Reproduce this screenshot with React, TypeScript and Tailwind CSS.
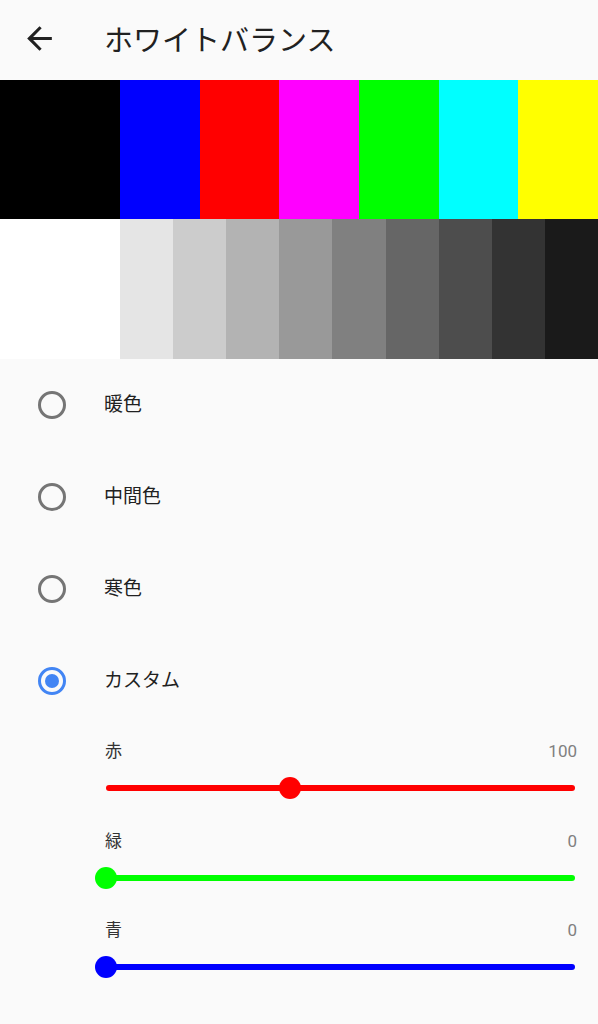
import React from "react";

const colorBars = ["#0000ff", "#ff0000", "#ff00ff", "#00ff00", "#00ffff", "#ffff00"];
const grayBars = ["#e5e5e5", "#cccccc", "#b3b3b3", "#999999", "#808080", "#666666", "#4d4d4d", "#333333", "#1a1a1a"];

const options = [
  { label: "暖色", selected: false },
  { label: "中間色", selected: false },
  { label: "寒色", selected: false },
  { label: "カスタム", selected: true },
];

const sliders = [
  { label: "赤", value: 100, color: "#ff0000" },
  { label: "緑", value: 0, color: "#00ff00" },
  { label: "青", value: 0, color: "#0000ff" },
];

function Slider({ label, value, color }: { label: string; value: number; color: string }) {
  const pct = (value / 255) * 100;
  return (
    <div className="h-[89.5px] flex flex-col">
      <div className="h-6 flex items-center justify-between pl-[1px]">
        <span className="text-[17px] text-[#333333]">{label}</span>
        <span className="text-[17px] text-[#808080]">{value}</span>
      </div>
      <div className="h-[48px] flex items-center pl-[2px] pr-[2px]">
        <div className="relative w-full h-[6px] rounded-full" style={{ backgroundColor: color }}>
          <div
            className="absolute top-1/2 w-[22px] h-[22px] rounded-full -translate-x-1/2 -translate-y-1/2"
            style={{ left: `${pct}%`, backgroundColor: color }}
          />
        </div>
      </div>
    </div>
  );
}

export default function App() {
  return (
    <div
      className="w-[598px] min-h-[1024px] bg-[#fafafa] text-[#212121]"
      style={{ fontFamily: 'Roboto, "Noto Sans CJK JP", sans-serif' }}
    >
      <header className="h-[80px] flex items-center">
        <div className="w-[104px] flex items-center pl-[21px] pb-[3px]">
          <svg width="37" height="37" viewBox="0 0 24 24" fill="#212121">
            <path d="M20 11H7.83l5.59-5.59L12 4l-8 8 8 8 1.41-1.41L7.83 13H20v-2z" />
          </svg>
        </div>
        <h1 className="text-[29px] leading-none font-normal pt-[2px]">ホワイトバランス</h1>
      </header>

      <div className="flex h-[139px]">
        <div className="w-[120px] bg-black" />
        {colorBars.map((c) => (
          <div key={c} className="flex-1" style={{ backgroundColor: c }} />
        ))}
      </div>
      <div className="flex h-[140px]">
        <div className="w-[120px] bg-white" />
        {grayBars.map((c) => (
          <div key={c} className="flex-1" style={{ backgroundColor: c }} />
        ))}
      </div>

      <div className="flex flex-col">
        {options.map((o) => (
          <div key={o.label} className="h-[92px] flex items-center">
            <div className="w-[104px] flex items-center pl-[38px]">
              <div
                className={
                  o.selected
                    ? "w-[28px] h-[28px] rounded-full border-[3px] border-[#4285f4] flex items-center justify-center"
                    : "w-[28px] h-[28px] rounded-full border-[3px] border-[#757575]"
                }
              >
                {o.selected && <div className="w-[14px] h-[14px] rounded-full bg-[#4285f4]" />}
              </div>
            </div>
            <span className="text-[19px]">{o.label}</span>
          </div>
        ))}
      </div>

      <div className="pt-[13px] pl-[104px] pr-[21px]">
        {sliders.map((s) => (
          <Slider key={s.label} {...s} />
        ))}
      </div>
    </div>
  );
}
